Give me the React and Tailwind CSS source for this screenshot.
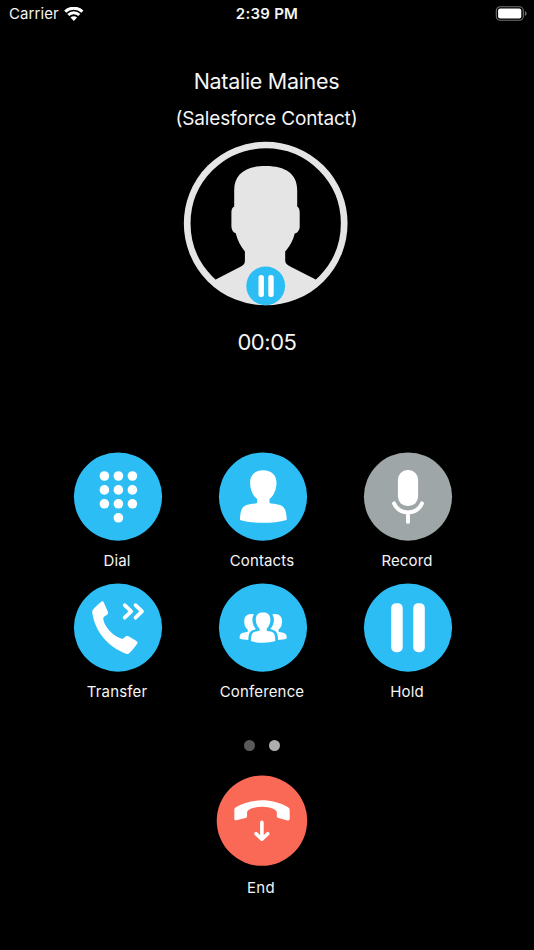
function StatusBar() {
  return (
    <header className="relative flex h-7 items-center justify-between pl-[9px] pr-[7px] text-[15px] leading-7">
      <div className="flex items-center gap-[5px]">
        <span className="tracking-[0.1px]">Carrier</span>
        <svg width="20" height="15" viewBox="0 0.7 20 15" fill="none" stroke="#fff" strokeWidth="3">
          <path d="M1.200 5.300a12.400 12.400 0 0 1 17.200 0" />
          <path d="M4.300 8.700a8 8 0 0 1 11 0" />
          <path d="M9.800 14.600 6.500 11.300a4.700 4.700 0 0 1 6.600 0z" fill="#fff" stroke="none" />
        </svg>
      </div>
      <span className="absolute left-0 w-full text-center text-[15px] font-semibold tracking-[0.25px]">2:39 PM</span>
      <svg className="overflow-visible" width="32" height="15" viewBox="0 0.6 32 15">
        <rect x="1.300" y="0.300" width="27" height="13.600" rx="4" fill="none" stroke="#727272" strokeWidth="1.100" />
        <rect x="3.100" y="2.200" width="23.200" height="9.800" rx="2" fill="#fff" />
        <path d="M29.900 4.900c2.200.7 2.200 3.900 0 4.600z" fill="#727272" />
      </svg>
    </header>
  )
}

function Avatar() {
  return (
    <svg className="block overflow-visible" width="164" height="164" viewBox="0.3 0.5 164 164">
      <defs>
        <clipPath id="avatar-clip">
          <circle cx="82" cy="82" r="80" />
        </clipPath>
      </defs>
      <path
        clipPath="url(#avatar-clip)"
        fill="#e5e5e5"
        d="M82 24.5c-20 0-31.500 8-31.500 24V65c-2 1-2.800 3-2.800 6v13c0 4 1.600 7 4.200 7.500 2 7.500 5.500 14 9.300 18.500v9c0 3-1 4.500-4 6L32 138v26h100v-26l-25.500-13c-3-1.500-5-3-5-6v-9c4-4.500 8-11 9.500-18 3-.6 5-3.500 5-7V71c0-3-.8-5-2.500-6V48.500c0-16-11.500-24-31.500-24z"
      />
      <circle cx="82" cy="82" r="78.500" fill="none" stroke="#e5e5e5" strokeWidth="6.700" />
      <circle cx="82" cy="144.300" r="19.400" fill="#2dbdf5" />
      <rect x="74.800" y="133.500" width="5.400" height="22" rx="2.500" fill="#fff" />
      <rect x="84.600" y="133.500" width="5.400" height="22" rx="2.500" fill="#fff" />
    </svg>
  )
}

function DialIcon() {
  return (
    <g fill="#fff">
      {[23.4, 37.3, 51.2].map((y) =>
        [30.4, 44.4, 58.4].map((x) => <circle key={`${x}-${y}`} cx={x} cy={y} r="4.800" />)
      )}
      <circle cx="44.400" cy="65.200" r="4.800" />
    </g>
  )
}

function ContactsIcon() {
  return (
    <path
      fill="#fff"
      d="M44.200 17.700c-8.500 0-13.100 5-13.100 12.300 0 7.300 3 13.500 7 16.500v3.200c0 .8-.4 1.100-1.300 1.200-9.500.8-12.800 2-14.500 6.800-.9 2.800-1.300 6.300-1.300 9.600 14 3.900 32.700 3.900 46.700 0 0-3.300-.5-6.800-1.400-9.600-1.700-4.800-5-6-14.500-6.800-.9-.1-1.300-.4-1.300-1.200v-3.200c4-3 7-9.200 7-16.500 0-7.300-4.800-12.300-13.300-12.300z"
    />
  )
}

function RecordIcon() {
  return (
    <g fill="none" stroke="#fff" strokeWidth="3.900" strokeLinecap="round">
      <rect x="33.900" y="17.500" width="20.200" height="36" rx="9.500" fill="#fff" stroke="none" />
      <path d="M30 50.800c5.500 12 22.500 12 28 0M44 60v9.300" />
    </g>
  )
}

function TransferIcon() {
  return (
    <g>
      <path
        fill="#fff"
        d="M27.300 18.100c1-.7 1.900-.5 2.400.5l4.200 9.500c.4 1 .2 2-.6 2.900-1.600 1.700-4.200 1.700-4 4.200.5 7.500 10 18 18.500 20 2 .4 2.900-2 4.600-2.700.7-.3 1.400-.2 2.100.2l8 4.600c1.200.8 1.400 1.900.5 3-2 2.700-4.900 6.500-8.200 9.500-.7.7-1.700.7-2.600.4C34.500 63.700 21 48.500 18.200 29c-.1-1 .1-2 .7-2.800 2.500-3 5.700-6 8.400-8.100z"
      />
      <path
        d="m50.700 21.500 6.500 6.300-6.500 6.300M61.500 21.500l6.500 6.300-6.500 6.300"
        fill="none"
        stroke="#fff"
        strokeWidth="3.700"
        strokeLinecap="round"
        strokeLinejoin="round"
      />
    </g>
  )
}

function ConferenceIcon() {
  return (
    <g fill="#fff">
      <path d="M44 28.700c-4.600 0-7.200 2.900-7.200 7.200 0 4 1.500 7.200 3.700 9v1.800c0 .5-.2.700-.7.800-5.200.6-6.300 1.400-7.200 4-.5 1.700-.7 3.700-.7 6 7.500 2.300 16.900 2.300 24.400 0 0-2.300-.2-4.300-.7-6-.9-2.600-2-3.400-7.200-4-.5-.1-.7-.3-.7-.8v-1.800c2.200-1.800 3.700-5 3.700-9 0-4.300-2.800-7.200-7.400-7.200z" />
      <path
        id="attendee"
        d="M35 30.900c-1.200 1.400-1.700 3.300-1.600 5.600.1 4 1.500 7 3.700 9-3.200 1-6.300 1.500-7.200 5.500-.4 1.500-.6 3.300-.6 5.400-3 0-6.100-.4-8.700-1.400 0-1.100 0-2.200.3-3 .7-2.200 2.700-2.900 7.200-3.500.5-.1.600-.3.600-.7v-1.800c-2-1.500-3.500-4.500-3.500-8.200 0-4.600 2.500-7.400 6.900-7.400 1.200 0 2.200.1 2.900.5z"
      />
      <use href="#attendee" transform="matrix(-1 0 0 1 88.300 0)" />
    </g>
  )
}

function HoldIcon() {
  return (
    <g fill="#fff">
      <rect x="27.200" y="19.600" width="11.500" height="49" rx="4.800" />
      <rect x="49.300" y="19.600" width="11.500" height="49" rx="4.800" />
    </g>
  )
}

const actions = [
  { label: 'Dial', icon: DialIcon },
  { label: 'Contacts', icon: ContactsIcon },
  { label: 'Record', icon: RecordIcon, disabled: true },
  { label: 'Transfer', icon: TransferIcon },
  { label: 'Conference', icon: ConferenceIcon },
  { label: 'Hold', icon: HoldIcon },
]

function ActionButton({ label, icon: Icon, disabled }) {
  return (
    <button className="flex flex-col items-center" disabled={disabled}>
      <svg className="block overflow-visible" width="88" height="88" viewBox="0 0.4 88 88">
        <circle cx="44" cy="44" r="44.100" fill={disabled ? '#9fa6a7' : '#2dbdf5'} />
        <Icon />
      </svg>
      <span className="-ml-[2px] mt-[8px] text-[15px] leading-6 tracking-[0.150px]">{label}</span>
    </button>
  )
}

export default function App() {
  return (
    <div className="flex h-[950px] w-[534px] flex-col overflow-hidden bg-black font-['Inter',sans-serif] text-[#f5f5f5]">
      <StatusBar />

      <section className="flex flex-col items-center pt-[38px]">
        <h1 className="pr-[1px] text-[21.500px] leading-[30px] tracking-[-0.300px]">Natalie Maines</h1>
        <p className="mt-[8px] pr-[1px] text-[19px] leading-[30px] tracking-[-0.150px]">(Salesforce Contact)</p>
        <div className="mt-[8px] pr-[2px]">
          <Avatar />
        </div>
        <p className="mt-[20px] text-[22px] leading-[32px] tracking-[-0.450px]">00:05</p>
      </section>

      <section className="ml-[74px] mt-[95px] grid w-[378px] grid-cols-[88px_88px_88px] gap-x-[57px] gap-y-[11px]">
        {actions.map((action) => (
          <ActionButton key={action.label} {...action} />
        ))}
      </section>

      <div className="mt-[36px] flex justify-center gap-[14px] pr-[11px]">
        <span className="size-[11px] rounded-full bg-[#5a5a5a]" />
        <span className="size-[11px] rounded-full bg-[#aeaeae]" />
      </div>

      <button className="mt-[25px] flex flex-col items-center pr-[10px]">
        <svg className="block overflow-visible" width="90" height="90" viewBox="0.3 0.6 90 90">
          <circle cx="45.250" cy="45.250" r="45.200" fill="#fa6856" />
          <path
            fill="#fff"
            d="M19.500 31.700c15-9 36.500-9 51.500 0 1.400.8 2 1.700 2 3.200v8.300c0 1.500-.8 2.100-2.200 1.800l-9-2.300c-1.200-.4-1.700-1.200-1.700-2.400 0-2.500.5-4.500-1.500-5.800-6.500-4.200-20.200-4.200-26.700 0-2 1.300-1.500 3.300-1.500 5.800 0 1.200-.5 2-1.700 2.300l-9 2.200c-1.400.3-2.100-.2-2.100-1.700v-8.200c0-1.500.5-2.400 1.900-3.200z"
          />
          <path
            d="M45.200 47v16.500M39.400 58.300l5.800 5.500 5.800-5.500"
            fill="none"
            stroke="#fff"
            strokeWidth="3.600"
            strokeLinecap="round"
            strokeLinejoin="round"
          />
        </svg>
        <span className="-ml-[2px] mt-[10px] text-[15px] leading-6 tracking-[0.300px]">End</span>
      </button>
    </div>
  )
}
